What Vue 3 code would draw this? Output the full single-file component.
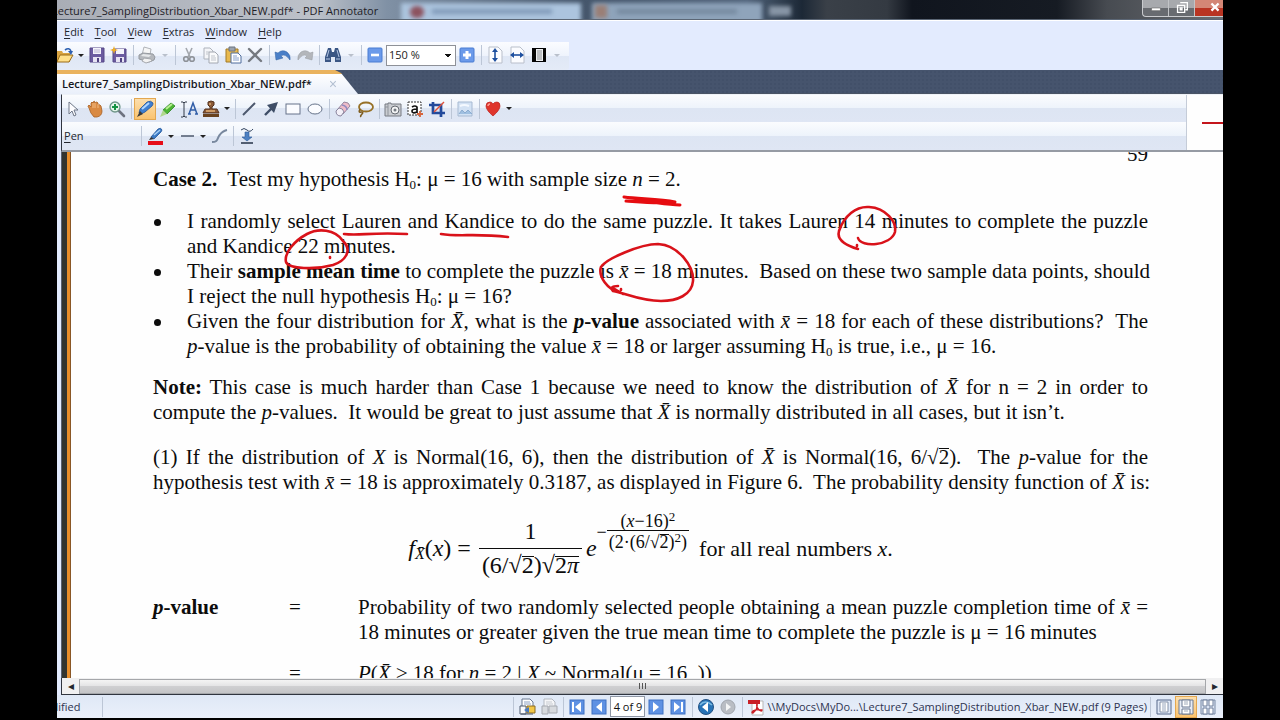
<script setup>
import { ref } from 'vue'

const menus = ['Edit', 'Tool', 'View', 'Extras', 'Window', 'Help']
const zoom = ref('150 %')
const pageField = ref('4 of 9')

const icons = {
  open: '<path d="M1 5h5l1 2h7v9H1z" fill="#d9a441"/><path d="M1 16l3-7h13l-4 7z" fill="#ffe08a" stroke="#9a6c18"/><path d="M9 4q4-3 6 1" fill="none" stroke="#2c5fb0" stroke-width="1.6"/><path d="M12 5h5l-2 4z" fill="#2c5fb0"/>',
  save: '<path d="M2 2h14v14H2z" fill="#6b5ba0" stroke="#564887"/><path d="M5 2h8v6H5z" fill="#f4f3fb"/><path d="M5 11h8v5H5z" fill="#e6e3f3"/><path d="M9 12h2v4H9z" fill="#4f4280"/><path d="M6 4h6M6 6h6" stroke="#b9b4d2"/>',
  saveas: '<path d="M3 3h13v13H3z" fill="#6b5ba0" stroke="#564887"/><path d="M6 3h8v5H6z" fill="#f4f3fb"/><path d="M6 11h8v5H6z" fill="#e6e3f3"/><path d="M10 12h2v4h-2z" fill="#4f4280"/><path d="M4 0l1 3 3 1-3 1-1 3-1-3-3-1 3-1z" fill="#efae25"/>',
  print: '<path d="M6 1l7 2-1 6H4z" fill="#f6f6f6" stroke="#b0b3b8"/><path d="M1 9l4-2 10 1 2 3-1 3-5 2-10-3z" fill="#b5b8bd" stroke="#94989e"/><path d="M5 8l8 1-2 2-8-1z" fill="#e6e8ea"/><path d="M6 12l7 1 1 2-6 2-4-2z" fill="#f2f2f2" stroke="#a5a8ad"/>',
  cut: '<path d="M6 2l4 9M12 2l-4 9" stroke="#a3a7ad" stroke-width="1.6"/><circle cx="6" cy="13" r="2.3" fill="none" stroke="#8d9197" stroke-width="1.6"/><circle cx="12" cy="13" r="2.3" fill="none" stroke="#8d9197" stroke-width="1.6"/>',
  copy: '<path d="M2 2h6l3 3v8H2z" fill="#f4f5f8" stroke="#adb2bb"/><path d="M7 6h6l3 3v8H7z" fill="#fafbfc" stroke="#a3a8b1"/><path d="M9 10h4M9 12h5M9 14h5M4 6h3M4 8h2" stroke="#c1c5cc"/>',
  paste: '<path d="M2 3h12v13H2z" fill="#e8b94e" stroke="#a27a27"/><path d="M5 1h6v4H5z" fill="#9ba3ae" stroke="#6c7480"/><path d="M7 7h7l3 3v7H7z" fill="#fff" stroke="#4f6c9c"/><path d="M9 10h4M9 12h6M9 14h6" stroke="#86a0cc"/>',
  del: '<path d="M3 3l12 12M15 3L3 15" stroke="#757980" stroke-width="2.4" stroke-linecap="round"/>',
  undo: '<path d="M1 6l1 8 7-2-2-2q4-3 9 4 1-5-3-8-5-3-9 1z" fill="#4a7fc8" stroke="#2f5f9f" stroke-width=".5"/>',
  redo: '<path d="M17 6l-1 8-7-2 2-2q-4-3-9 4-1-5 3-8 5-3 9 1z" fill="#b3b6bb" stroke="#94989e" stroke-width=".5"/>',
  find: '<path d="M4 2h3l1 4h2l1-4h3l3 9v5h-6v-5H7v5H1v-5z" fill="#3a5684"/><path d="M5 4l-2 7M13 4l2 7M2 13h4M12 13h4" stroke="#b4c6e4"/>',
  minus: '<rect x="2" y="2" width="14" height="14" rx="1" fill="#6b9aea" stroke="#4a7dd2"/><path d="M5 9h8" stroke="#fff" stroke-width="2.6"/>',
  plus: '<rect x="2" y="2" width="14" height="14" rx="1" fill="#6b9aea" stroke="#4a7dd2"/><path d="M5 9h8M9 5v8" stroke="#fff" stroke-width="3"/>',
  fith: '<path d="M3 1h9l4 4v12H3z" fill="#fbfcff" stroke="#b9bfca"/><path d="M9 4v10" stroke="#1d4f9f" stroke-width="1.6"/><path d="M6 6l3-4 3 4zM6 12l3 4 3-4z" fill="#1d4f9f"/>',
  fitw: '<path d="M3 1h9l4 4v12H3z" fill="#fbfcff" stroke="#b9bfca"/><path d="M4 9h10" stroke="#1d4f9f" stroke-width="1.6"/><path d="M6 6L2 9l4 3zM12 6l4 3-4 3z" fill="#1d4f9f"/>',
  full: '<path d="M2 2h14v14H2z" fill="#050505"/><path d="M6 3h7v12H6z" fill="#eef0f2"/><path d="M7 5h5M7 7h5M7 9h5M7 11h5M7 13h5" stroke="#8b8f94"/>',
  cursor: '<path d="M5 2v12l3-3 2 5 2-1-2-5h4z" fill="#fdfdff" stroke="#6e7787"/>',
  hand: '<path d="M3 8q-2-2 0-3l2 2V3q1-2 2 0V2q2-2 2 1 2-2 3 0v2q2-1 3 1l1 5q0 5-5 6H8q-4-4-5-9z" fill="#d98a43" stroke="#a75f22" stroke-width=".8"/><path d="M7 3v5M9 3v5M12 4v4" stroke="#f5bd83"/>',
  mag: '<path d="M10 10l6 6" stroke="#6e7380" stroke-width="2.6" stroke-linecap="round"/><circle cx="7" cy="7" r="5" fill="#e4f5ea" stroke="#70968a" stroke-width="1.3"/><path d="M7 4v6M4 7h6" stroke="#159343" stroke-width="2"/>',
  pen: '<path d="M3 13l1-4 7-7q4-2 6 1 0 2-1 3l-7 6-4 2z" fill="#3f7fd0" stroke="#22549a" stroke-width=".8"/><path d="M6 9l7-6" stroke="#b2d7ff" stroke-width="2"/><path d="M1 17l3-6 3 3z" fill="#3d3a38"/>',
  hilite: '<path d="M5 10l8-7 4 3-8 8z" fill="#4cb534" stroke="#2a8123" stroke-width=".8"/><path d="M8 9l6-5" stroke="#b8ee91" stroke-width="2"/><path d="M5 10l4 4-7 3z" fill="#aed88d"/>',
  textA: '<path d="M1 2h2l1 1 1-1h2M4 3v13M1 17h2l1-1 1 1h2" fill="none" stroke="#333b49"/><path d="M9 14l4-11 4 11M10 10h5M8 14h3M15 14h3" fill="none" stroke="#315ea7" stroke-width="1.5"/>',
  stamp: '<path d="M6 2q3-2 6 0v3l-2 2v2h5l2 4H1l2-4h5V7L6 5z" fill="#8a5a38" stroke="#54321c"/><path d="M1 14h16v3H1z" fill="#69421e"/><path d="M8 3v2M4 11h9" stroke="#e6b276" stroke-width="1.4"/>',
  line: '<path d="M3 15L15 3" stroke="#4c586d" stroke-width="2"/>',
  arrow: '<path d="M3 15l8-8" stroke="#3e4d66" stroke-width="2.4"/><path d="M5 5l11-3-4 11z" fill="#3e4d66"/>',
  rect: '<rect x="2" y="4" width="14" height="10" fill="#fbfcff" stroke="#66738a"/>',
  ellipse: '<ellipse cx="9" cy="9" rx="7" ry="5" fill="#fbfcff" stroke="#66738a"/>',
  eraser: '<path d="M3 10l7-8q5 0 6 4l-7 8z" fill="#eebcc9" stroke="#96879f"/><path d="M2 11l3-3q4 0 5 4l-3 4q-5 0-5-5z" fill="#f3f0f8" stroke="#89839c"/><path d="M8 5q5 1 5 5" fill="none" stroke="#928ac0" stroke-width="1.6"/>',
  lasso: '<ellipse cx="10" cy="7" rx="7" ry="4.5" fill="none" stroke="#977127" stroke-width="1.8"/><path d="M4 9q-2 4 1 3 3 0 1 2t-1 3" fill="none" stroke="#7e5c1e" stroke-width="1.6"/>',
  camera: '<path d="M1 4h3V3h3v1h10v12H1z" fill="#c9ccd1" stroke="#777b82"/><path d="M4 4v12M1 7h3" stroke="#8f949b"/><circle cx="11" cy="10" r="4" fill="#f3f4f5" stroke="#656a72"/><circle cx="11" cy="10" r="1.5" fill="#737981"/>',
  selA: '<path d="M2 2h13v13H2z" fill="#fff" stroke="#333" stroke-dasharray="2 1"/><path d="M6 7q3-2 5 0v6M11 9q-5 0-5 2 0 3 5 1" fill="none" stroke="#111" stroke-width="1.7"/><path d="M14 11v6M11 14h6" stroke="#d6653d" stroke-width="1.8"/>',
  crop: '<path d="M5 2v11h12M1 5h12v12" fill="none" stroke="#234a9b" stroke-width="2.7"/><path d="M6 12L16 2" stroke="#df5139" stroke-width="1.5"/>',
  image: '<path d="M2 2h14v14H2z" fill="#d3e2f4" stroke="#a7bad2"/><path d="M3 14l3-4 3 3 3-3 4 4" fill="#9fbfe0" stroke="#8babcf"/><path d="M4 6q4-2 9 0" fill="none" stroke="#f4f9ff" stroke-width="2"/>',
  heart: '<path d="M9 16Q2 10 2 6q0-4 4-4 2 0 3 2 1-2 4-2 3 0 3 4 0 4-7 10z" fill="#df352c" stroke="#b9201d" stroke-width=".7"/><path d="M4 6q0-2 2-2" stroke="#ff9e93" fill="none" stroke-width="1.5"/>',
  redpen: '<path d="M5 10l7-8q3-2 4 1l-1 2-7 7z" fill="#3b7ac4" stroke="#23559a" stroke-width=".8"/><path d="M8 8l6-5" stroke="#a6cff5" stroke-width="1.6"/><path d="M2 14h15v4H2z" fill="#e60d18"/><path d="M3 13l2-3 3 2z" fill="#333"/>',
  dash: '<path d="M3 9h13" stroke="#4c586d" stroke-width="1.5"/>',
  curve: '<path d="M2 15c6 0 5-3 7-6s3-5 8-6" fill="none" stroke="#78889e" stroke-width="2"/>',
  down: '<path d="M3 3q3-3 6 0t6-1" fill="none" stroke="#33445f"/><path d="M7 5h4v5h3l-5 4-5-4h3z" fill="#4c80c2" stroke="#2b5993" stroke-width=".6"/><path d="M3 16h12" stroke="#17243a" stroke-width="1.4"/>',
  docs: '<path d="M4 1h8l3 3v8H4z" fill="#fff" stroke="#697891"/><path d="M6 4h6M6 6h7" stroke="#8fa3c4"/><path d="M2 8h6v8H2z" fill="#fafbfd" stroke="#4c5b70"/><path d="M9 8h8v7H9z" fill="#f2c748" stroke="#8a6a22"/><path d="M11 9v6l-5-3z" fill="#4b7bc1"/><path d="M3 16h12" stroke="#4c5b70"/>',
  docsoff: '<path d="M4 1h8l3 3v8H4z" fill="#f5f6f8" stroke="#b3b8c0"/><path d="M6 4h6M6 6h7" stroke="#c7cbd1"/><path d="M2 8h6v8H2zM9 8h8v7H9z" fill="#d7dade" stroke="#a5a9b0"/>',
  first: '<rect x="2" y="2" width="14" height="14" fill="#5e91e3" stroke="#3e70c2"/><path d="M5 4v10" stroke="#fff" stroke-width="2"/><path d="M13 4v10L7 9z" fill="#fff"/>',
  prev: '<rect x="2" y="2" width="14" height="14" fill="#5e91e3" stroke="#3e70c2"/><path d="M12 4v10L6 9z" fill="#fff"/>',
  next: '<rect x="2" y="2" width="14" height="14" fill="#5e91e3" stroke="#3e70c2"/><path d="M6 4v10l6-5z" fill="#fff"/>',
  last: '<rect x="2" y="2" width="14" height="14" fill="#5e91e3" stroke="#3e70c2"/><path d="M13 4v10" stroke="#fff" stroke-width="2"/><path d="M5 4v10l6-5z" fill="#fff"/>',
  back: '<circle cx="9" cy="9" r="7.5" fill="#2672b6" stroke="#235182"/><path d="M3 7q5-6 12 0" fill="none" stroke="#79bae2" stroke-width="1.5"/><path d="M11 4v10L5 9z" fill="#fff"/>',
  forward: '<circle cx="9" cy="9" r="7" fill="#b9bdc4" stroke="#a0a5ad"/><path d="M7 5v8l5-4z" fill="#f4f5f6"/>',
  pdf: '<path d="M5 3h11v14H5z" fill="#fff" stroke="#b5b5b5"/><path d="M1 2h12v4H1z" fill="#c91f26"/><path d="M10 6q1 5-4 9-2 0 0-2 4-2 9-1 0 2-3 0-3-3-2-6" fill="none" stroke="#c91f26" stroke-width="1.4"/>',
  single: '<path d="M2 2h14v14H2z" fill="#dfe8f7" stroke="#57698a"/><path d="M5 4h8v10H5z" fill="#fff" stroke="#8290a8"/><path d="M7 6h4M7 8h4M7 10h4M7 12h4" stroke="#98a6bd"/>',
  contin: '<path d="M2 2h14v14H2z" fill="#e8edf6" stroke="#6d7b93"/><path d="M5 2h8v7H5zM5 11h8v5H5z" fill="#fff" stroke="#6d7b93"/><path d="M7 4h4M7 6h4M7 13h4" stroke="#a1abba"/>',
  grid: '<path d="M2 2h14v14H2z" fill="#dbe4f3" stroke="#7989a4"/><path d="M4 2h4v6H4zM10 2h4v6h-4zM4 10h4v6H4zM10 10h4v6h-4z" fill="#fff" stroke="#6f7f9a"/>'
}

const b = (icon, label, active) => ({ t: 'btn', icon, label, active })
const caret = { t: 'caret' }
const off = { t: 'off' }
const sep = { t: 'sep' }

const mainLeft = [
  b('open', 'Open'), caret, b('save', 'Save'), b('saveas', 'Save as'), sep, b('print', 'Print'), off, sep,
  b('cut', 'Cut'), b('copy', 'Copy'), b('paste', 'Paste'), b('del', 'Delete'), sep,
  b('undo', 'Undo'), b('redo', 'Redo'), sep, b('find', 'Find'), off, sep, b('minus', 'Zoom out')
]
const mainRight = [
  b('plus', 'Zoom in'), sep, b('fith', 'Fit height'), b('fitw', 'Fit width'), b('full', 'Full screen'), off
]
const tools = [
  b('cursor', 'Select'), b('hand', 'Pan'), b('mag', 'Zoom'), sep,
  b('pen', 'Pen', true), b('hilite', 'Marker'), b('textA', 'Text'), b('stamp', 'Stamp'), caret, sep,
  b('line', 'Line'), b('arrow', 'Arrow'), b('rect', 'Rectangle'), b('ellipse', 'Ellipse'), sep,
  b('eraser', 'Eraser'), b('lasso', 'Lasso'), sep,
  b('camera', 'Snapshot'), b('selA', 'Select text'), b('crop', 'Crop'), sep,
  b('image', 'Image'), sep, b('heart', 'Favorites'), caret
]
const penTools = [
  sep, b('redpen', 'Pen colour'), caret, b('dash', 'Line width'), caret, b('curve', 'Smoothing'), sep, b('down', 'Flatten')
]
const statusA = [sep, b('docs', 'Copy pages'), b('docsoff', 'Paste pages'), sep, b('first', 'First page'), b('prev', 'Previous page')]
const statusB = [b('next', 'Next page'), b('last', 'Last page'), sep, b('back', 'Back'), b('forward', 'Forward'), sep, b('pdf', 'Document')]
const statusC = [sep, b('single', 'Single page'), b('contin', 'Continuous', true), b('grid', 'Two pages')]
</script>

<template>
  <div class="screen">
    <div class="window">
      <header class="titlebar">
        <div class="glass" aria-hidden="true"><i class="tab-a"></i><i class="dot-a"></i><i class="smear-a"></i><i class="tab-b"></i><i class="dot-b"></i><i class="smear-b"></i><i class="plus-tab"></i></div>
        <span class="title">Lecture7_SamplingDistribution_Xbar_NEW.pdf* - PDF Annotator</span>
        <div class="winbtns">
          <button aria-label="Minimize"><svg viewBox="0 0 18 18"><path d="M4 9h10v3H4z" fill="#fff" stroke="#555" stroke-width=".6" /></svg></button>
          <button aria-label="Restore"><svg viewBox="0 0 18 18"><path d="M7 3h8v8h-2M4 6h8v8H4zM7 9h2v2H7z" fill="none" stroke="#fff" stroke-width="1.5" /></svg></button>
          <button class="close" aria-label="Close"><svg viewBox="0 0 18 18"><path d="M5 4l8 8M13 4l-8 8" stroke="#fff" stroke-width="2.6" /></svg></button>
        </div>
      </header>

      <nav class="menubar">
        <button v-for="m in menus" :key="m"><u>{{ m[0] }}</u>{{ m.slice(1) }}</button>
      </nav>

      <div class="mainbar">
        <div class="strip">
          <template v-for="(it, i) in mainLeft" :key="i">
            <button v-if="it.t === 'btn'" class="ib" :aria-label="it.label"><svg viewBox="0 0 18 18" v-html="icons[it.icon]"></svg></button>
            <i v-else :class="it.t"></i>
          </template>
          <select v-model="zoom" aria-label="Zoom level" class="zoom"><option>150 %</option><option>100 %</option></select>
          <template v-for="(it, i) in mainRight" :key="'r' + i">
            <button v-if="it.t === 'btn'" class="ib" :aria-label="it.label"><svg viewBox="0 0 18 18" v-html="icons[it.icon]"></svg></button>
            <i v-else :class="it.t"></i>
          </template>
        </div>
      </div>

      <div class="tabstrip">
        <div class="tab">
          <span>Lecture7_SamplingDistribution_Xbar_NEW.pdf*</span>
          <button aria-label="Close tab"><svg viewBox="0 0 18 18"><path d="M4 4l10 10M14 4L4 14" stroke="#b4c0d2" stroke-width="2" /></svg></button>
        </div>
      </div>

      <div class="annobars">
        <div class="bars">
          <div class="bar">
            <template v-for="(it, i) in tools" :key="i">
              <button v-if="it.t === 'btn'" class="ib" :class="{ active: it.active }" :aria-label="it.label"><svg viewBox="0 0 18 18" v-html="icons[it.icon]"></svg></button>
              <i v-else :class="it.t"></i>
            </template>
          </div>
          <div class="bar">
            <span class="penlabel"><u>P</u>en</span>
            <template v-for="(it, i) in penTools" :key="i">
              <button v-if="it.t === 'btn'" class="ib" :aria-label="it.label"><svg viewBox="0 0 18 18" v-html="icons[it.icon]"></svg></button>
              <i v-else :class="it.t"></i>
            </template>
          </div>
        </div>
        <div class="preview"><i></i></div>
      </div>

      <main class="viewer">
        <article class="page">
          <div class="pageno">59</div>
          <p><b>Case 2.</b>&nbsp; Test my hypothesis H<sub>0</sub>: μ = 16 with sample size <em>n</em> = 2.</p>
          <ul>
            <li>
              <span class="ln full">I randomly select Lauren and Kandice to do the same puzzle. It takes Lauren 14 minutes to complete the puzzle</span>
              <span class="ln">and Kandice 22 minutes.</span>
            </li>
            <li>
              <span class="ln full">Their <b>sample mean time</b> to complete the puzzle is <em>x̄</em> = 18 minutes.&nbsp; Based on these two sample data points, should</span>
              <span class="ln">I reject the null hypothesis H<sub>0</sub>: μ = 16?</span>
            </li>
            <li>
              <span class="ln full">Given the four distribution for <em>X̄</em>, what is the <b><em>p</em>-value</b> associated with <em>x̄</em> = 18 for each of these distributions?&nbsp; The</span>
              <span class="ln"><em>p</em>-value is the probability of obtaining the value <em>x̄</em> = 18 or larger assuming H<sub>0</sub> is true, i.e., μ = 16.</span>
            </li>
          </ul>
          <p class="note">
            <span class="ln full"><b>Note:</b> This case is much harder than Case 1 because we need to know the distribution of <em>X̄</em> for n = 2 in order to</span>
            <span class="ln">compute the <em>p</em>-values.&nbsp; It would be great to just assume that <em>X̄</em> is normally distributed in all cases, but it isn’t.</span>
          </p>
          <p class="case">
            <span class="ln full">(1) If the distribution of <em>X</em> is Normal(16, 6), then the distribution of <em>X̄</em> is Normal(16, 6/√<span class="root">2</span>).&nbsp; The <em>p</em>-value for the</span>
            <span class="ln full">hypothesis test with <em>x̄</em> = 18 is approximately 0.3187, as displayed in Figure 6.&nbsp; The probability density function of <em>X̄</em> is:</span>
          </p>
          <div class="formula">
            <span class="lhs"><em>f</em><sub><em>X̄</em></sub>(<em>x</em>) =</span>
            <span class="frac"><span>1</span><span>(6/√<span class="root">2</span>)√<span class="root">2<em>π</em></span></span></span>
            <em>e</em>
            <span class="expo">−<span class="frac"><span>(<em>x</em>−16)<sup>2</sup></span><span>(2·(6/√<span class="root">2</span>)<sup>2</sup>)</span></span></span>
            <span class="rhs">for all real numbers <em>x</em>.</span>
          </div>
          <dl>
            <dt><b><em>p</em>-value</b></dt>
            <dd>=</dd>
            <dd>
              <span class="ln full">Probability of two randomly selected people obtaining a mean puzzle completion time of <em>x̄</em> =</span>
              <span class="ln">18 minutes or greater given the true mean time to complete the puzzle is μ = 16 minutes</span>
            </dd>
            <dt></dt>
            <dd>=</dd>
            <dd><em>P</em>(<em>X̄</em> ≥ 18 for <em>n</em> = 2 | <em>X</em> ~ Normal(μ = 16 &nbsp;))</dd>
          </dl>
          <svg class="ink" width="1152" height="527" viewBox="71 151 1152 527" fill="none" stroke="#d9121a" stroke-width="2.600" stroke-linecap="round" stroke-linejoin="round" aria-hidden="true">
            <path d="M624 196C640 198 660 198 675 201C658 203 640 201 626 200C640 198 660 203 680 204" stroke="#e60c10" stroke-width="3" />
            <path d="M344 233C360 235 370 231 407 233M441 233C460 236 475 232 508 236" />
            <path d="M333 264C345 260 353 250 343 240C335 228 318 227 307 233C294 240 284 252 286 261C289 268 315 269 333 264M330 256v1" />
            <path d="M858 248C848 245 836 240 839 230C844 215 856 205 869 206C886 207 897 221 895 231C891 245 861 247 858 237M857 244v1" />
            <path d="M621 292C607 289 598 275 601 266C606 258 640 243 658 243C679 244 694 266 693 280C692 294 677 300 661 300C640 300 625 292 613 290C610 287 612 285 618 285M613 287L623 293M621 288v1" />
          </svg>
        </article>
      </main>

      <div class="hscroll">
        <button aria-label="Scroll left">◂</button>
        <div class="thumb"><i></i><i></i><i></i></div>
        <button aria-label="Scroll right">▸</button>
      </div>

      <footer class="status">
        <span class="modified">Modified</span>
        <i class="sep"></i>
        <div class="statusright">
          <template v-for="(it, i) in statusA" :key="'a' + i">
            <button v-if="it.t === 'btn'" class="ib" :aria-label="it.label"><svg viewBox="0 0 18 18" v-html="icons[it.icon]"></svg></button>
            <i v-else :class="it.t"></i>
          </template>
          <input v-model="pageField" aria-label="Page" class="pagefield" />
          <template v-for="(it, i) in statusB" :key="'b' + i">
            <button v-if="it.t === 'btn'" class="ib" :aria-label="it.label"><svg viewBox="0 0 18 18" v-html="icons[it.icon]"></svg></button>
            <i v-else :class="it.t"></i>
          </template>
          <span class="path">\\MyDocs\MyDo...\Lecture7_SamplingDistribution_Xbar_NEW.pdf (9 Pages)</span>
          <template v-for="(it, i) in statusC" :key="'c' + i">
            <button v-if="it.t === 'btn'" class="ib" :class="{ active: it.active }" :aria-label="it.label"><svg viewBox="0 0 18 18" v-html="icons[it.icon]"></svg></button>
            <i v-else :class="it.t"></i>
          </template>
        </div>
      </footer>
    </div>
  </div>
</template>

<style>
body { background: #000; overflow: hidden; }
</style>

<style scoped>
.screen { box-sizing: border-box; height: 100vh; padding: 0 57px 2px; background: #000; }
.window { height: 100%; display: flex; flex-direction: column; overflow: hidden; background: #e3ebfe; font: 11px/16px "Open Sans", "Noto Sans", sans-serif; color: #23262e; }
button { border: 0; padding: 0; margin: 0; background: none; font: inherit; color: inherit; }
svg { display: block; }

.titlebar { position: relative; flex: none; display: flex; justify-content: space-between; align-items: flex-start; height: 19px; border-bottom: 1px solid #5b6675; box-shadow: 0 1px 0 #fff; background: linear-gradient(90deg, #a9adb6 0, #bcc1c9 260px, #8091a5 330px, #45566b 520px, #52657c 690px, #1c2836 745px, #3a4048 770px, #343a42 830px, #10151e 855px, #161b23 1000px, #474b51 1050px, #6a6d71 100%); }
.glass { position: absolute; inset: 0; overflow: hidden; }
.glass i { position: absolute; filter: blur(2px); }
.tab-a { left: 344px; top: 3px; width: 180px; height: 20px; background: #acc4de; }
.dot-a { left: 353px; top: 6px; width: 14px; height: 12px; border-radius: 6px; background: #8c525e; }
.smear-a { left: 375px; top: 9px; width: 120px; height: 5px; background: #809ab8; }
.tab-b { left: 535px; top: 3px; width: 170px; height: 20px; background: #8fa4bb; }
.dot-b { left: 538px; top: 5px; width: 12px; height: 13px; background: #9a7f76; }
.smear-b { left: 560px; top: 9px; width: 120px; height: 5px; background: #75899f; }
.plus-tab { left: 712px; top: 6px; width: 22px; height: 10px; background: #8896a6; }
.title { position: relative; margin-left: -5px; line-height: 21px; white-space: nowrap; color: #1e2127; }
.winbtns { position: relative; display: flex; height: 16px; border: 1px solid #c9cbce; border-top: 0; border-right: 0; border-radius: 0 0 0 4px; background: linear-gradient(#a7a9ad 50%, #686b70 50%); }
.winbtns button { width: 26px; border-right: 1px solid #c2c4c7; display: flex; justify-content: center; }
.winbtns svg { width: 16px; height: 16px; }
.winbtns .close { width: 28px; border-right: 0; justify-content: flex-end; background: linear-gradient(#d48776 50%, #b93422 50%); }

.menubar { flex: none; display: flex; gap: 11px; padding: 2px 7px 0; height: 20px; }
.menubar button { line-height: 20px; }
u { text-underline-offset: 2px; }

.mainbar { flex: none; display: flex; height: 28px; }
.strip { display: flex; align-items: center; padding: 0 5px 2px 0; margin-left: -3px; background: linear-gradient(#fbfcff, #eef3fc 50%, #dfe7f5 50%, #e4ebf7); border-radius: 0 0 3px 0; }
.ib { flex: none; width: 22px; height: 22px; display: flex; align-items: center; justify-content: center; }
.ib svg { width: 18px; height: 18px; }
.ib.active { background: linear-gradient(#fce0b0, #fbc26c); outline: 1px solid #e3a750; outline-offset: -1px; }
.sep { flex: none; width: 6px; height: 20px; background: linear-gradient(#bcc6d6, #bcc6d6) center / 1px 100% no-repeat; }
.caret, .off { flex: none; width: 10px; height: 22px; display: flex; align-items: center; justify-content: center; }
.off { width: 14px; }
.caret::before, .off::before { content: ""; border: 3px solid transparent; border-top-color: #222; border-bottom: 0; }
.off::before { border-top-color: #b9c0cb; }
.zoom { width: 70px; height: 21px; padding: 0 2px; border: 1px solid #8e9198; border-radius: 0; appearance: none; font: inherit; color: #222; background: linear-gradient(#111, #111) 60px 10px / 2px 1px no-repeat, linear-gradient(#111, #111) 59px 9px / 4px 1px no-repeat, linear-gradient(#111, #111) 58px 8px / 6px 1px no-repeat, #fff; }

.tabstrip { flex: none; height: 23px; border-bottom: 1px solid #4a5465; background: radial-gradient(circle, #425069 25%, transparent 30%) 0 0 / 4px 4px, #46546d; }
.tab { box-sizing: border-box; width: 301px; height: 24px; display: flex; align-items: center; justify-content: space-between; padding: 0 20px 0 5px; border-top: 4px solid #eab35e; background: linear-gradient(#fff, #e9effa); font-weight: 600; color: #15171c; clip-path: polygon(0 0, 278px 0, 284px 3px, 100% 100%, 0 100%); white-space: nowrap; }
.tab svg { width: 10px; height: 10px; }

.annobars { flex: none; display: flex; margin-left: 4px; border-top: 1px solid #eef2f8; border-left: 1px solid #30353f; border-bottom: 2px solid #969ba4; }
.bars { flex: 1; min-width: 0; }
.bar { display: flex; align-items: center; height: 27px; background: linear-gradient(#fbfcfe, #edf3fb 50%, #dde5f3 50%, #dfe6f4); }
.bar + .bar { height: 28px; }
.penlabel { width: 76px; box-sizing: border-box; padding-left: 2px; }
.preview { width: 36px; display: flex; align-items: center; justify-content: flex-end; border-left: 1px solid #c5ccd8; background: #fefefe; }
.preview i { width: 21px; height: 2px; background: #c4151c; }

.viewer { flex: 1; min-height: 0; overflow: hidden; margin-left: 4px; padding-left: 10px; background: linear-gradient(90deg, #596070 0 1px, #33342f 1px 6px, #e98d2a 6px 9px, #8a5726 9px 10px, #fff 10px); }
.page { display: flow-root; position: relative; padding: 0 75px 0 82px; font: 21px/25px "Liberation Serif", "Times New Roman", serif; color: #0c0c0c; white-space: nowrap; background: #fefefe; }
.page p, .page ul, .page dl, .page dd { margin: 0; padding: 0; }
.pageno { margin-top: -10px; text-align: right; }
.page ul { margin-top: 17px; list-style: none; }
.page li { position: relative; padding-left: 34px; }
.page li::before { content: ""; position: absolute; left: 1px; top: 10px; width: 7px; height: 7px; border-radius: 50%; background: #0c0c0c; }
.ln { display: block; }
.full { text-align: justify; text-align-last: justify; }
sub, sup { font-size: 13px; line-height: 1px; }
sub { vertical-align: -3px; }
.page .note { margin-top: 16px; }
.page .case { margin-top: 20px; }
.root { border-top: 1px solid currentColor; display: inline-block; line-height: 17px; }
.formula { height: 93px; padding-top: 7px; display: flex; align-items: center; justify-content: center; font-size: 24px; }
.lhs sub { font-size: 16px; }
.frac { display: inline-flex; flex-direction: column; align-items: stretch; text-align: center; margin: 0 4px 0 8px; }
.frac > span { padding: 0 3px; }
.frac > span + span { border-top: 1px solid currentColor; padding-top: 4px; }
.frac > span:first-child { padding-bottom: 4px; }
.expo { display: flex; align-items: center; font-size: 18px; line-height: 18px; margin-bottom: 34px; }
.expo .frac { margin: 0; }
.expo .frac > span { padding: 0 2px; }
.expo .frac > span + span { padding-top: 2px; }
.expo .root { line-height: 15px; }
.expo sup { font-size: 13px; vertical-align: 6px; }
.rhs { margin-left: 10px; font-size: 22px; }
.page dl { display: grid; grid-template-columns: 136px 69px 1fr; row-gap: 16px; }
.ink { position: absolute; left: 0; top: 0; }

.hscroll { flex: none; display: flex; align-items: center; height: 16px; margin-left: 4px; border-left: 1px solid #30353f; border-bottom: 1px solid #30353f; background: #f0f0f1; font-size: 12px; }
.hscroll button { width: 17px; line-height: 14px; }
.thumb { flex: 1; height: 13px; display: flex; align-items: center; justify-content: center; gap: 2px; border: 1px solid #a5a7aa; background: linear-gradient(#f4f4f4, #e4e4e5 45%, #cfcfd1 50%, #c4c5c7); }
.thumb i { width: 1px; height: 6px; background: #555; }

.status { flex: none; display: flex; align-items: center; height: 23px; background: linear-gradient(#dfe8f6, #eaf0fa); color: #2d3350; white-space: nowrap; }
.modified { margin-left: -22px; width: 64px; }
.statusright { display: flex; align-items: center; margin-left: auto; padding-right: 4px; }
.pagefield { box-sizing: border-box; width: 35px; height: 21px; padding: 0; border: 1px solid #8f97a5; text-align: center; font: inherit; color: #111; background: #fff; }
</style>
